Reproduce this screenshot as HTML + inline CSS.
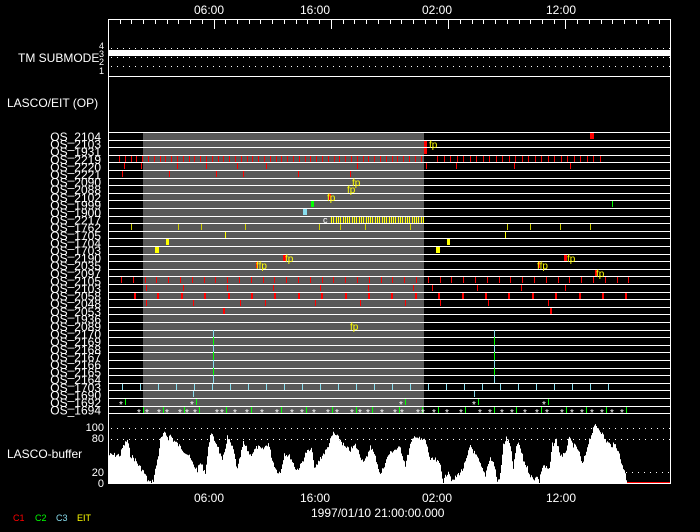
<!DOCTYPE html>
<html><head><meta charset="utf-8"><style>
html,body{margin:0;padding:0;background:#000;width:700px;height:532px;overflow:hidden}
svg{display:block}
text{font-family:"Liberation Sans",sans-serif;fill:#fff}
</style></head><body>
<svg id="s" width="700" height="532" xmlns="http://www.w3.org/2000/svg">
<rect width="700" height="532" fill="#000"/>
<rect x="143" y="132" width="281" height="281" fill="#595959"/>
<g id="g"></g>
<text x="194" y="14" font-size="12">06:00</text>
<text x="300" y="14" font-size="12">16:00</text>
<text x="422" y="14" font-size="12">02:00</text>
<text x="546" y="14" font-size="12">12:00</text>
<text x="194" y="502" font-size="12">06:00</text>
<text x="300" y="502" font-size="12">16:00</text>
<text x="422" y="502" font-size="12">02:00</text>
<text x="546" y="502" font-size="12">12:00</text>
<text x="311" y="517" font-size="12">1997/01/10 21:00:00.000</text>
<text x="18" y="62" font-size="12">TM SUBMODE</text>
<text x="7" y="107" font-size="12">LASCO/EIT (OP)</text>
<text x="7" y="458" font-size="12">LASCO-buffer</text>
<text x="104" y="431" font-size="11" text-anchor="end">100</text>
<text x="104" y="442" font-size="11" text-anchor="end">80</text>
<text x="104" y="476" font-size="11" text-anchor="end">20</text>
<text x="104" y="487" font-size="11" text-anchor="end">0</text>
<text x="99" y="49" font-size="9">4</text>
<text x="99" y="57" font-size="9">3</text>
<text x="99" y="65" font-size="9">2</text>
<text x="99" y="74" font-size="9">1</text>
<text x="13" y="521" font-size="9" style="fill:#f00">C1</text>
<text x="35" y="521" font-size="9" style="fill:#0f0">C2</text>
<text x="56" y="521" font-size="9" style="fill:#8de">C3</text>
<text x="77" y="521" font-size="9" style="fill:#ff0">EIT</text>
</svg>
<script>
var g=document.getElementById('g'),NS='http://www.w3.org/2000/svg';
function el(t,a,txt){var e=document.createElementNS(NS,t);for(var k in a)e.setAttribute(k,a[k]);if(txt)e.textContent=txt;g.appendChild(e);return e;}
function R(x,y,w,h,c){el('rect',{x:x,y:y,width:w,height:h,fill:c});}
var L=108,Rt=671;
R(L,19,Rt-L,1,'#fff');R(L,19,1,465,'#fff');R(Rt-1,19,1,465,'#fff');
for(var x=L;x<Rt;x+=11.73){var d=Math.round((x-213.5)/11.73);var maj=(d%10==0);R(Math.round(x),19,1,maj?10:5,'#fff');}
for(var x=L+3;x<Rt;x+=6){R(x,48,1,1,'#fff');R(x,57,1,1,'#fff');R(x,66,1,1,'#fff');}
R(L,50,Rt-L,6,'#fff');R(L,76,Rt-L,1,'#fff');
var labels=['2104','2103','1931','2219','2220','2221','2090','2088','2102','1999','1900','2217','1762','1705','1704','1703','2190','2035','2097','2105','2103','2058','2048','2053','1936','2089','2170','2169','2168','2167','2166','2165','2164','1703','1690','1692','1694'];
var H=7.6,T=132;
function ry(i){return T+i*H;}
for(var i=0;i<labels.length;i++){R(L,Math.round(ry(i)),Rt-L,1,'#fff');el('text',{x:101,y:ry(i)+9,'font-size':12,'text-anchor':'end'},'OS_'+labels[i]);}
R(L,413,Rt-L,1,'#fff');
function ev(i,xs,c,w){xs.forEach(function(x){R(x,Math.round(ry(i))+1,w||1,6,c);});}
function fp(x,i,t){el('text',{x:x,y:Math.round(ry(i))+8,'font-size':10,style:'fill:#ff0'},t||'fp');}
var red='#f00',dr='#c00',yl='#ff0',dy='#cc0',cy='#8de',gr='#0f0';
ev(0,[590],red,4);
ev(1,[424],red,3);ev(2,[424],red,3);
var a=[];for(var x=119;x<425;x+=5.8)a.push(Math.round(x));for(var x=437;x<600;x+=6.5)a.push(Math.round(x));ev(3,a,red,1);
ev(4,[124,141,177,206,237,266,357,426,456,514,570],red);
ev(5,[122,169,216,243,298,350],red);
ev(8,[329],red,2);ev(9,[311],gr,3);ev(9,[612],gr,1);ev(10,[303],cy,4);
a=[];for(var x=331;x<424;x+=2.3)a.push(Math.round(x));ev(11,a,yl,1);
el('text',{x:323,y:Math.round(ry(11))+7,'font-size':9},'c');
ev(12,[131,178,201,245,319,340,365,410,507,530,560,590],dy);
ev(13,[225,505],yl);
ev(14,[166,447],yl,3);ev(15,[155,436],yl,4);
ev(16,[283],red,3);ev(16,[564],red,3);ev(17,[256,538],red,2);ev(18,[595],red,2);
fp(429,1);fp(352,6);fp(347,7);fp(327,8);fp(285,16);fp(256,17,'ffp');fp(567,16);fp(537,17,'ffp');fp(596,18);fp(350,25);
a=[];for(var x=121;x<630;x+=11.8)a.push(Math.round(x));ev(19,a,red);
ev(20,[146,183,227,273,320,368,413,432,477,521,565],red);
a=[];for(var x=134;x<630;x+=23.4)a.push(Math.round(x));ev(21,a,red,2);
ev(22,[146,193,240,265,315,360,405,440,488,548],red);
ev(23,[223,550],red,2);
for(var i=26;i<33;i++){R(213,Math.round(ry(i)),1,8,i%2?gr:cy);R(494,Math.round(ry(i)),1,8,i%2?gr:cy);}
a=[];for(var x=122;x<620;x+=18)a.push(Math.round(x));ev(33,a,cy);
ev(34,[193,474],cy);
function star(x,y){el('text',{x:x,y:y,'font-size':10},'*');}
[125,196,405,478,548].forEach(function(x){star(x-6,Math.round(ry(35))+10);R(x,Math.round(ry(35))+1,1,6,gr);});
[137,145,157,165,178,185,193,215,220,233,245,260,275,290,300,312,326,335,350,358,366,380,393,400,416,421,432,445,459,478,488,500,510,523,535,545,560,570,580,590,600,610,620].forEach(function(x,k){star(x,Math.round(ry(36))+10);if(k%2==0)R(x+6,Math.round(ry(36))+1,1,6,gr);});
for(var x=L+3;x<Rt;x+=6){R(x,428,1,1,'#fff');R(x,439,1,1,'#fff');}
for(var x=590;x<Rt;x+=6){R(x,472,1,1,'#fff');}
var P=[[108,455],[120,455],[122,448],[125,443],[127,440],[130,455],[135,460],[138,465],[142,470],[145,475],[147,480],[150,483],[153,480],[155,470],[158,455],[160,440],[163,435],[165,433],[168,438],[170,435],[173,440],[178,445],[183,450],[188,455],[193,465],[197,470],[200,463],[205,472],[210,433],[217,445],[222,462],[227,437],[233,450],[237,470],[243,443],[250,455],[257,447],[262,450],[268,443],[272,460],[276,470],[280,473],[284,453],[290,457],[296,470],[300,466],[306,452],[312,450],[314,470],[320,458],[326,450],[333,433],[340,440],[345,448],[350,450],[355,445],[362,460],[367,458],[370,445],[376,460],[380,475],[388,455],[393,450],[400,448],[405,465],[410,445],[415,435],[420,440],[425,440],[430,460],[435,460],[440,465],[443,482],[448,470],[452,482],[457,475],[462,470],[466,460],[470,445],[475,455],[478,460],[482,470],[485,475],[488,462],[490,458],[494,465],[497,482],[500,475],[503,445],[506,438],[510,445],[513,470],[516,445],[519,445],[523,460],[527,468],[530,475],[533,480],[536,475],[539,482],[541,470],[543,465],[546,468],[549,470],[552,445],[556,440],[560,455],[565,455],[568,438],[573,445],[578,450],[582,465],[585,455],[588,442],[592,432],[595,425],[600,430],[605,440],[610,445],[615,445],[618,450],[620,460],[624,470],[627,483]];
var pts='108,483 ',seed=7;function rnd(){seed=(seed*9301+49297)%233280;return seed/233280;}
for(var k=0;k<P.length-1;k++){var x0=P[k][0],y0=P[k][1],x1=P[k+1][0],y1=P[k+1][1];for(var x=x0;x<x1;x++){var y=y0+(y1-y0)*(x-x0)/(x1-x0)+(rnd()-0.5)*5;y=Math.min(483,y);pts+=x+','+y.toFixed(1)+' '+(x+1)+','+y.toFixed(1)+' ';}}
pts+='627,483';
el('polygon',{points:pts,fill:'#fff'});
R(627,482,Rt-628,1,red);
R(L,483,Rt-L,1,'#fff');
</script>
</body></html>
